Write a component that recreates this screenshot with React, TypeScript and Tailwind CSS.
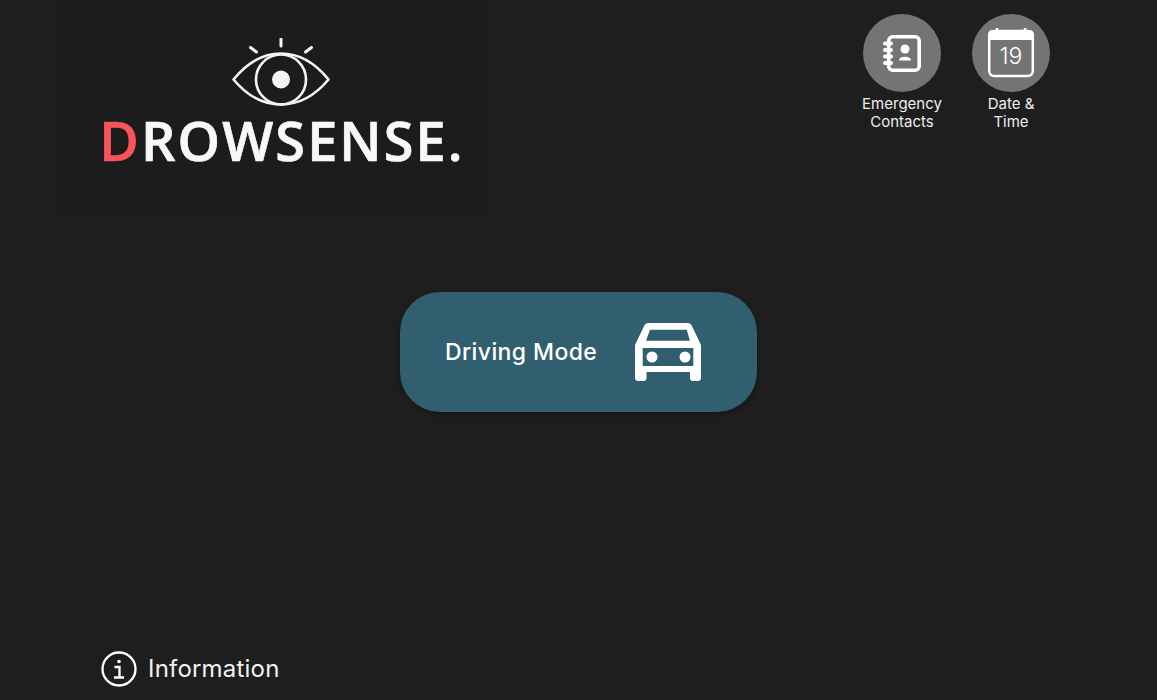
// Drowsense — home screen

function EyeLogo() {
  return (
    <svg width="98" height="68" viewBox="0 0 98 68" fill="none" stroke="#f4f4f4" strokeWidth="2.600" strokeLinecap="round">
      <path d="M49 1v7" strokeWidth="3" />
      <path d="M18.500 9.500l6 4.500" strokeWidth="3" />
      <path d="M79.500 9.500l-6 4.500" strokeWidth="3" />
      <path d="M1.500 41.500C14 26 30 15.500 49 15.500S84 26 96.500 41.500C84 56.500 68 66.500 49 66.500S14 56.500 1.500 41.500z" strokeLinejoin="round" />
      <circle cx="49" cy="41.500" r="25" />
      <circle cx="49" cy="41.500" r="9" fill="#f4f4f4" stroke="none" />
    </svg>
  )
}

function ContactsIcon() {
  return (
    <svg width="38" height="37" viewBox="0 0 38 37" fill="none">
      <rect x="5.700" y="1.800" width="30.500" height="33.400" rx="4" stroke="white" strokeWidth="3.600" />
      <path d="M2 8.500h6M2 15h6M2 21.500h6M2 28h6" stroke="white" strokeWidth="4" strokeLinecap="round" />
      <circle cx="22" cy="14" r="4.500" fill="white" />
      <path d="M16 25.500c0-2.600 2.500-3.700 6-3.700s6 1.100 6 3.700z" fill="white" />
    </svg>
  )
}

function CalendarIcon() {
  return (
    <svg width="48" height="50" viewBox="0 0 48 50" fill="none">
      <path d="M5.500 2h37a4.500 4.500 0 0 1 4.500 4.500V12H1V6.500A4.500 4.500 0 0 1 5.500 2z" fill="white" />
      <rect x="2.200" y="3" width="43.600" height="45" rx="5" stroke="white" strokeWidth="2.500" />
      <path d="M10 0.500v3M38 0.500v3" stroke="white" strokeWidth="2.500" strokeLinecap="round" />
    </svg>
  )
}

function CarFront() {
  return (
    <svg width="66" height="58" viewBox="0 0 66 58">
      <path
        fill="white"
        fillRule="evenodd"
        d="M14 0h38c2.600 0 4.300 1.200 5 3.200L65.500 21c.4.800.5 1.300.5 2.500V55c0 1.700-1.300 3-3 3h-5c-1.700 0-3-1.300-3-3v-6H11.500v6c0 1.700-1.300 3-3 3H3c-1.700 0-3-1.300-3-3V23.500c0-1.200.1-1.700.5-2.500L9 3.200C9.700 1.200 11.400 0 14 0zM15 6.700L11 17.700h44L51.700 6.700zM7.700 25v18h50.600V25z"
      />
      <circle cx="17" cy="34" r="5.500" fill="white" />
      <circle cx="50" cy="34" r="5.500" fill="white" />
    </svg>
  )
}

function InfoIcon() {
  return (
    <svg width="36" height="36" viewBox="0 0 36 36" fill="none" stroke="white" strokeWidth="2.300">
      <circle cx="18" cy="18" r="16.500" />
      <circle cx="18" cy="10.500" r="1.800" fill="white" stroke="none" />
      <path d="M13.500 16h5v10M13 26.500h10" />
    </svg>
  )
}

export default function App() {
  return (
    <div className="h-[700px] w-full overflow-hidden bg-[#1e1e1e] font-['Inter','Liberation_Sans',sans-serif] text-white flex flex-col">
      {/* Header */}
      <div className="flex items-start pl-[55px] pr-[107px] h-[292px]">
        <div className="w-[431px] h-[210px] bg-[#1c1c1c] flex flex-col items-center pt-[38px] pl-[21px]">
          <EyeLogo />
          <p className="-mt-[1px] ml-[2px] font-['Open_Sans',sans-serif] text-[54px] leading-[70px] font-semibold tracking-[2.1px] [-webkit-text-stroke:0.7px_currentColor] whitespace-nowrap text-[#f8f8f8]">
            <span className="text-[#f8545a]">D</span>ROWSENSE.
          </p>
        </div>

        <div className="ml-auto flex gap-[31px] pt-[14px]">
          <div className="w-[78px] flex flex-col items-center">
            <div className="w-[78px] h-[78px] rounded-full bg-[#747474] flex items-center justify-center">
              <ContactsIcon />
            </div>
            <p className="mt-[3px] text-[15px] leading-[18px] text-center text-[#eeeeee] whitespace-nowrap">Emergency<br />Contacts</p>
          </div>
          <div className="w-[78px] flex flex-col items-center">
            <div className="relative w-[78px] h-[78px] rounded-full bg-[#747474] flex items-center justify-center">
              <CalendarIcon />
              <span className="absolute inset-x-0 top-[29px] text-center text-[23px] leading-[26px] font-light">19</span>
            </div>
            <p className="mt-[3px] text-[15px] leading-[18px] text-center text-[#eeeeee]">Date &amp;<br />Time</p>
          </div>
        </div>
      </div>

      {/* Driving mode */}
      <div className="flex justify-center">
        <button className="w-[357px] h-[120px] rounded-[40px] bg-[#325f6f] shadow-[0_2px_5px_rgba(0,0,0,0.3)] flex items-center justify-between pl-[45px] pr-[56px]">
          <span className="text-[23px] font-medium leading-none tracking-[0.4px]">Driving Mode</span>
          <CarFront />
        </button>
      </div>

      {/* Information */}
      <div className="mt-auto flex items-center gap-[11px] pl-[101px] pb-[13px]">
        <InfoIcon />
        <span className="text-[24px] leading-[30px] tracking-[0.2px] text-[#f2f2f2]">Information</span>
      </div>
    </div>
  )
}
